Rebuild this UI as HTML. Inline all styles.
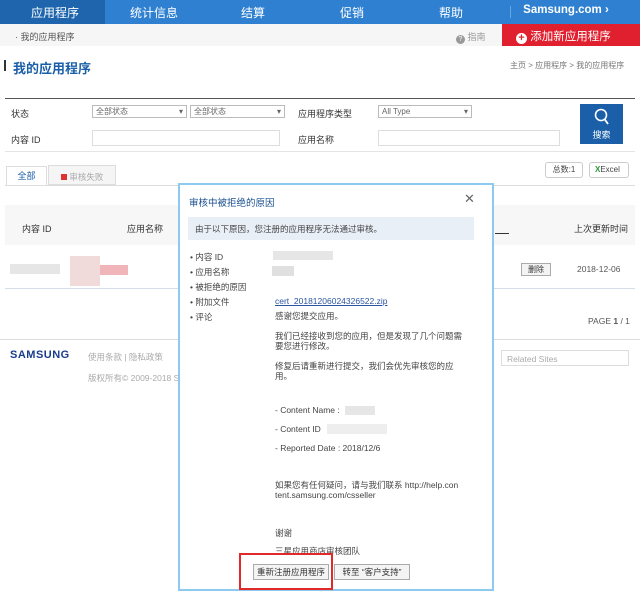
<!DOCTYPE html>
<html><head><meta charset="utf-8"><style>
*{margin:0;padding:0;box-sizing:border-box}
body{width:640px;height:595px;overflow:hidden;background:#fff;font-family:"Liberation Sans","Noto Sans CJK SC",sans-serif;font-size:9px;color:#333;position:relative}
.a{position:absolute;white-space:nowrap}
.nav{left:0;top:0;width:640px;height:24px;background:#2f80d1}
.nav span{position:absolute;top:4px;color:#fff;font-size:12px;transform:translateX(-50%)}
.sel{border:1px solid #bbb;height:13px;background:#fff;font-size:8px;color:#666;padding-left:3px;line-height:11px}
.inp{border:1px solid #ddd;height:16px;background:#fff}
.lbl{font-size:9px;color:#333}
.m{font-size:8.5px;color:#444}
</style></head><body>
<div class="a nav">
<div class="a" style="left:0;top:0;width:105px;height:24px;background:#1e65ad"></div>
<span style="left:55px">应用程序</span><span style="left:154px">统计信息</span><span style="left:253px">结算</span><span style="left:352px">促销</span><span style="left:451px">帮助</span>
<div class="a" style="left:510px;top:6px;width:1px;height:12px;background:#6aa6e0"></div>
<span style="left:566px;font-weight:bold;font-size:11.5px">Samsung.com ›</span>
</div>
<div class="a" style="left:0;top:24px;width:640px;height:22px;background:#f6f6f6"></div>
<div class="a" style="left:15px;top:30px;color:#555;font-size:9px">· 我的应用程序</div>
<div class="a" style="left:456px;top:30px;color:#999;font-size:9px"><span style="display:inline-block;width:9px;height:9px;border-radius:50%;background:#999;color:#fff;font-size:7px;text-align:center;line-height:9px;vertical-align:-1px">?</span> 指南</div>
<div class="a" style="left:502px;top:24px;width:138px;height:22px;background:#e0202e;color:#fff;font-size:11.5px;padding:4px 0 0 14px"><span style="display:inline-block;width:11px;height:11px;border-radius:50%;background:#fff;color:#e0202e;text-align:center;line-height:11px;font-weight:bold;font-size:11px;vertical-align:-1px">+</span> 添加新应用程序</div>
<div class="a" style="left:4px;top:60px;width:2px;height:11px;background:#333"></div>
<div class="a" style="left:13px;top:58px;color:#1a5fa8;font-size:13px;font-weight:bold">我的应用程序</div>
<div class="a" style="left:510px;top:60px;color:#777;font-size:8px">主页 &gt; 应用程序 &gt; 我的应用程序</div>
<div class="a" style="left:5px;top:98px;width:630px;height:1px;background:#555"></div>
<div class="a lbl" style="left:11px;top:107px">状态</div>
<div class="a sel" style="left:92px;top:105px;width:95px">全部状态<span style="float:right;margin-right:3px">▾</span></div>
<div class="a sel" style="left:190px;top:105px;width:95px">全部状态<span style="float:right;margin-right:3px">▾</span></div>
<div class="a lbl" style="left:298px;top:107px">应用程序类型</div>
<div class="a sel" style="left:378px;top:105px;width:94px">All Type<span style="float:right;margin-right:3px">▾</span></div>
<div class="a lbl" style="left:11px;top:133px">内容 ID</div>
<div class="a inp" style="left:92px;top:130px;width:188px"></div>
<div class="a lbl" style="left:298px;top:133px">应用名称</div>
<div class="a inp" style="left:378px;top:130px;width:182px"></div>
<div class="a" style="left:580px;top:104px;width:43px;height:40px;background:#1a5fa8;color:#fff;text-align:center;font-size:9px;padding-top:4px"><svg width="16" height="18" viewBox="0 0 16 18"><circle cx="7" cy="7" r="5.5" fill="none" stroke="#fff" stroke-width="1.6"/><path d="M10.5 11 L14 16" stroke="#fff" stroke-width="1.8"/></svg><br>搜索</div>
<div class="a" style="left:5px;top:151px;width:630px;height:1px;background:#e5e5e5"></div>
<div class="a" style="left:6px;top:166px;width:41px;height:20px;border:1px solid #ddd;border-bottom:none;background:#fff;color:#1a5fa8;text-align:center;line-height:19px">全部</div>
<div class="a" style="left:48px;top:165px;width:68px;height:20px;border:1px solid #ddd;background:#f5f5f5;color:#aaa;padding:5px 0 0 12px;font-size:8.5px"><span style="display:inline-block;width:6px;height:6px;background:#d33"></span> 审核失败</div>
<div class="a" style="left:5px;top:185px;width:630px;height:1px;background:#ddd"></div>
<div class="a" style="left:545px;top:162px;width:38px;height:16px;border:1px solid #ccc;border-radius:3px;font-size:8px;text-align:center;line-height:14px;color:#444">总数:1</div>
<div class="a" style="left:589px;top:162px;width:40px;height:16px;border:1px solid #ccc;border-radius:3px;font-size:8px;line-height:14px;padding-left:5px;color:#444"><b style="color:#2a9a3a">X</b>Excel</div>
<div class="a" style="left:5px;top:205px;width:630px;height:40px;background:#f7f7f7"></div>
<div class="a lbl" style="left:22px;top:222px">内容 ID</div>
<div class="a lbl" style="left:127px;top:222px">应用名称</div>
<div class="a lbl" style="left:574px;top:222px">上次更新时间</div>
<div class="a" style="left:495px;top:233px;width:14px;height:1px;background:#333"></div>
<div class="a" style="left:10px;top:264px;width:50px;height:10px;background:#e6e6e6"></div>
<div class="a" style="left:70px;top:256px;width:30px;height:30px;background:#f0dada"></div>
<div class="a" style="left:100px;top:265px;width:28px;height:10px;background:#f0b5b8"></div>
<div class="a" style="left:521px;top:263px;width:30px;height:13px;border:1px solid #aaa;background:#f3f3f3;font-size:8px;text-align:center;line-height:11px">删除</div>
<div class="a" style="left:577px;top:264px;color:#555;font-size:8.5px">2018-12-06</div>
<div class="a" style="left:5px;top:288px;width:630px;height:1px;background:#d5dde8"></div>
<div class="a" style="left:588px;top:316px;color:#555;font-size:8.5px">PAGE <b>1</b> / 1</div>
<div class="a" style="left:0;top:339px;width:640px;height:1px;background:#ddd"></div>
<div class="a" style="left:10px;top:349px;color:#1a3c8c;font-size:11px;font-weight:bold;letter-spacing:0.5px">SAMSUNG</div>
<div class="a" style="left:88px;top:351px;color:#aaa;font-size:8.5px">使用条款 | 隐私政策</div>
<div class="a" style="left:88px;top:372px;color:#aaa;font-size:8.5px">版权所有© 2009-2018 S</div>
<div class="a" style="left:501px;top:350px;width:128px;height:16px;border:1px solid #ddd;color:#aaa;font-size:8.5px;padding:3px 0 0 5px">Related Sites</div>
<!-- modal -->
<div class="a" style="left:178px;top:183px;width:316px;height:408px;border:2px solid #8ec9ef;background:#fff"></div>
<div class="a" style="left:189px;top:195px;color:#1a4f8f;font-size:9.5px">审核中被拒绝的原因</div>
<div class="a" style="left:464px;top:191px;color:#666;font-size:13px">✕</div>
<div class="a" style="left:188px;top:217px;width:286px;height:23px;background:#e9eff7;color:#444;font-size:8.5px;padding:6px 0 0 7px">由于以下原因，您注册的应用程序无法通过审核。</div>
<div class="a m" style="left:190px;top:251px">• 内容 ID</div>
<div class="a m" style="left:190px;top:266px">• 应用名称</div>
<div class="a m" style="left:190px;top:281px">• 被拒绝的原因</div>
<div class="a m" style="left:190px;top:296px">• 附加文件</div>
<div class="a m" style="left:190px;top:311px">• 评论</div>
<div class="a" style="left:273px;top:251px;width:60px;height:9px;background:#e6e6e6"></div>
<div class="a" style="left:272px;top:266px;width:22px;height:10px;background:#e0e0e0"></div>
<div class="a m" style="left:275px;top:296px;color:#2a55a0;text-decoration:underline">cert_20181206024326522.zip</div>
<div class="a m" style="left:275px;top:311px;line-height:10px;white-space:normal;width:190px">感谢您提交应用。<br><br>我们已经接收到您的应用，但是发现了几个问题需要您进行修改。<br><br>修复后请重新进行提交，我们会优先审核您的应用。</div>
<div class="a m" style="left:275px;top:405px">- Content Name :</div>
<div class="a" style="left:345px;top:406px;width:30px;height:9px;background:#e6e6e6"></div>
<div class="a m" style="left:275px;top:424px">- Content ID</div>
<div class="a" style="left:327px;top:424px;width:60px;height:10px;background:#eee"></div>
<div class="a m" style="left:275px;top:443px">- Reported Date : 2018/12/6</div>
<div class="a m" style="left:275px;top:480px;line-height:10px">如果您有任何疑问，请与我们联系 http://help.con<br>tent.samsung.com/csseller</div>
<div class="a m" style="left:275px;top:527px">谢谢</div>
<div class="a m" style="left:275px;top:545px">三星应用商店审核团队</div>
<div class="a" style="left:239px;top:553px;width:94px;height:37px;border:2px solid #e02a2a"></div>
<div class="a" style="left:253px;top:564px;width:76px;height:16px;border:1px solid #aaa;background:#f4f4f4;font-size:8.5px;text-align:center;line-height:14px">重新注册应用程序</div>
<div class="a" style="left:334px;top:564px;width:76px;height:16px;border:1px solid #aaa;background:#f4f4f4;font-size:8.5px;text-align:center;line-height:14px">转至 “客户支持”</div>
</body></html>
